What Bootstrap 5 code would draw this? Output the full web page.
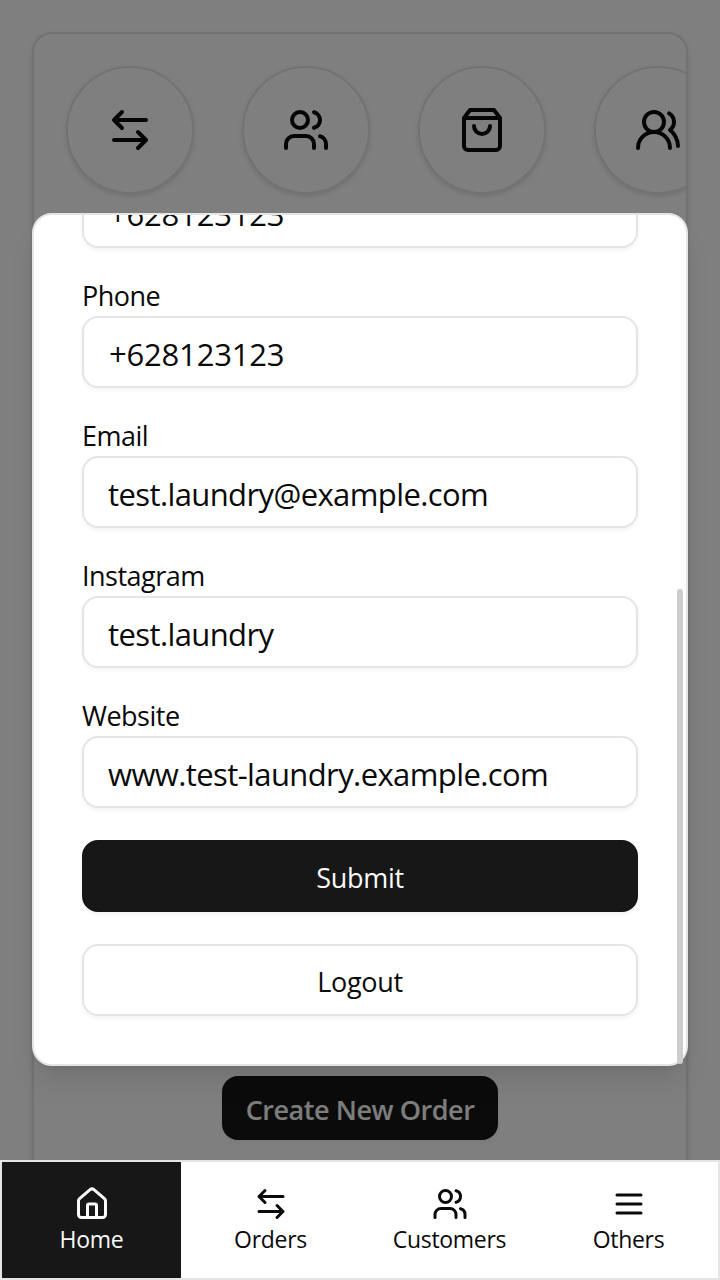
<!DOCTYPE html>
<html lang="en">
<head>
<meta charset="utf-8">
<meta name="viewport" content="width=device-width, initial-scale=1">
<title>Laundry</title>
<link href="https://cdn.jsdelivr.net/npm/bootstrap@5.3.0/dist/css/bootstrap.min.css" rel="stylesheet">
<style>
body{font-family:"Open Sans","Noto Sans",sans-serif;color:#0a0a0a;background:#fff}
.screen{height:1280px;width:720px}
.line{border:2px solid #e5e5e5}
.panel{margin:32px 32px 0;padding:32px;height:1300px;border-radius:20px;box-shadow:0 2px 6px rgba(0,0,0,.1),0 2px 4px -2px rgba(0,0,0,.1)}
.shortcuts{gap:48px;margin-right:-32px;padding-bottom:12px;margin-top:-32px;padding-top:32px;margin-left:-32px;padding-left:32px}
.round-btn{width:128px;height:128px;box-shadow:0 2px 6px rgba(0,0,0,.1),0 2px 4px -2px rgba(0,0,0,.1)}
.round-btn svg{width:48px;height:48px}
svg{fill:none;stroke:currentColor;stroke-width:2;stroke-linecap:round;stroke-linejoin:round}
.create{left:222px;top:1076px;width:276px;height:64px;border-radius:16px;background:#171717;color:#fafafa;font-weight:600;font-size:27px;letter-spacing:-.45px;box-shadow:0 2px 4px rgba(0,0,0,.05)}
.veil{background:rgba(0,0,0,.5)}
.sheet{left:32px;top:213px;width:656px;height:853px;border-radius:20px;background:#fff;box-shadow:0 20px 30px -6px rgba(0,0,0,.1),0 8px 12px -8px rgba(0,0,0,.1)}
.sheet form{margin-top:-39px;padding:0 48px;gap:32px}
.sheet label{font-size:27px;line-height:32px;padding-bottom:4px;letter-spacing:-.5px}
.sheet .form-control,.action{height:72px;border:2px solid #e5e5e5;border-radius:16px;box-shadow:0 2px 4px rgba(0,0,0,.05);color:#0a0a0a}
.sheet .form-control{font-size:31px;line-height:40px;padding:16px 24px;letter-spacing:-.6px;white-space:nowrap}
.sheet .digits{letter-spacing:-.2px;padding-left:25px}
.action{font-size:27px;letter-spacing:-.3px;padding:4px 0 0}
.action.solid{background:#171717;border-color:#171717;color:#fafafa}
.thumb{left:677px;top:589px;width:6px;height:475px;border-radius:3px;background:#cdcdcd}
.tabs{height:120px;background:#fff}
.tabs a{color:#0a0a0a;text-decoration:none;font-size:23px;line-height:34px;letter-spacing:-.3px;padding-top:24px}
.tabs a.on{background:#171717;color:#fafafa}
.tabs svg{width:36px;height:36px}
</style>
</head>
<body>
<svg class="d-none">
<symbol id="swap" viewBox="0 0 24 24"><path d="M8 3 4 7l4 4M4 7h16M16 21l4-4-4-4M20 17H4"/></symbol>
<symbol id="users" viewBox="0 0 24 24"><path d="M16 21v-2a4 4 0 0 0-4-4H6a4 4 0 0 0-4 4v2"/><circle cx="9" cy="7" r="4"/><path d="M22 21v-2a4 4 0 0 0-3-3.87M16 3.13a4 4 0 0 1 0 7.75"/></symbol>
<symbol id="bag" viewBox="0 0 24 24"><path d="M6 2 3 6v14a2 2 0 0 0 2 2h14a2 2 0 0 0 2-2V6l-3-4ZM3 6h18M16 10a4 4 0 0 1-8 0"/></symbol>
<symbol id="people" viewBox="0 0 24 24"><path d="M18 21a8 8 0 0 0-16 0"/><circle cx="10" cy="8" r="5"/><path d="M22 20c0-3.37-2-6.5-4-8a5 5 0 0 0-.45-8.3"/></symbol>
<symbol id="house" viewBox="0 0 24 24"><path d="M15 21v-8a1 1 0 0 0-1-1h-4a1 1 0 0 0-1 1v8"/><path d="M3 10a2 2 0 0 1 .709-1.528l7-5.999a2 2 0 0 1 2.582 0l7 5.999A2 2 0 0 1 21 10v9a2 2 0 0 1-2 2H5a2 2 0 0 1-2-2z"/></symbol>
<symbol id="menu" viewBox="0 0 24 24"><path d="M4 6h16M4 12h16M4 18h16"/></symbol>
</svg>
<div class="screen position-relative overflow-hidden">
  <main class="panel line">
    <div class="shortcuts d-flex overflow-hidden">
      <div class="round-btn line rounded-circle flex-shrink-0 d-flex align-items-center justify-content-center"><svg><use href="#swap"/></svg></div>
      <div class="round-btn line rounded-circle flex-shrink-0 d-flex align-items-center justify-content-center"><svg><use href="#users"/></svg></div>
      <div class="round-btn line rounded-circle flex-shrink-0 d-flex align-items-center justify-content-center"><svg><use href="#bag"/></svg></div>
      <div class="round-btn line rounded-circle flex-shrink-0 d-flex align-items-center justify-content-center"><svg><use href="#people"/></svg></div>
    </div>
  </main>
  <div class="create position-absolute d-flex align-items-center justify-content-center pt-1">Create New Order</div>
  <div class="veil position-absolute top-0 start-0 w-100 h-100"></div>

  <section class="sheet line position-absolute overflow-hidden">
    <form class="d-flex flex-column">
      <div class="form-control digits">+628123123</div>
      <div><label class="d-block">Phone</label><div class="form-control digits">+628123123</div></div>
      <div><label class="d-block">Email</label><div class="form-control">test.laundry@example.com</div></div>
      <div><label class="d-block">Instagram</label><div class="form-control">test.laundry</div></div>
      <div><label class="d-block">Website</label><div class="form-control">www.test-laundry.example.com</div></div>
      <button type="button" class="btn action solid w-100">Submit</button>
      <button type="button" class="btn action w-100">Logout</button>
    </form>
  </section>
  <div class="thumb position-absolute"></div>

  <nav class="tabs line position-absolute bottom-0 start-0 w-100 d-flex">
    <a href="#" class="on col-3 d-flex flex-column align-items-center"><svg><use href="#house"/></svg>Home</a>
    <a href="#" class="col-3 d-flex flex-column align-items-center"><svg><use href="#swap"/></svg>Orders</a>
    <a href="#" class="col-3 d-flex flex-column align-items-center"><svg><use href="#users"/></svg>Customers</a>
    <a href="#" class="col-3 d-flex flex-column align-items-center"><svg><use href="#menu"/></svg>Others</a>
  </nav>
</div>
<script src="https://cdn.jsdelivr.net/npm/bootstrap@5.3.0/dist/js/bootstrap.bundle.min.js"></script>
</body>
</html>
